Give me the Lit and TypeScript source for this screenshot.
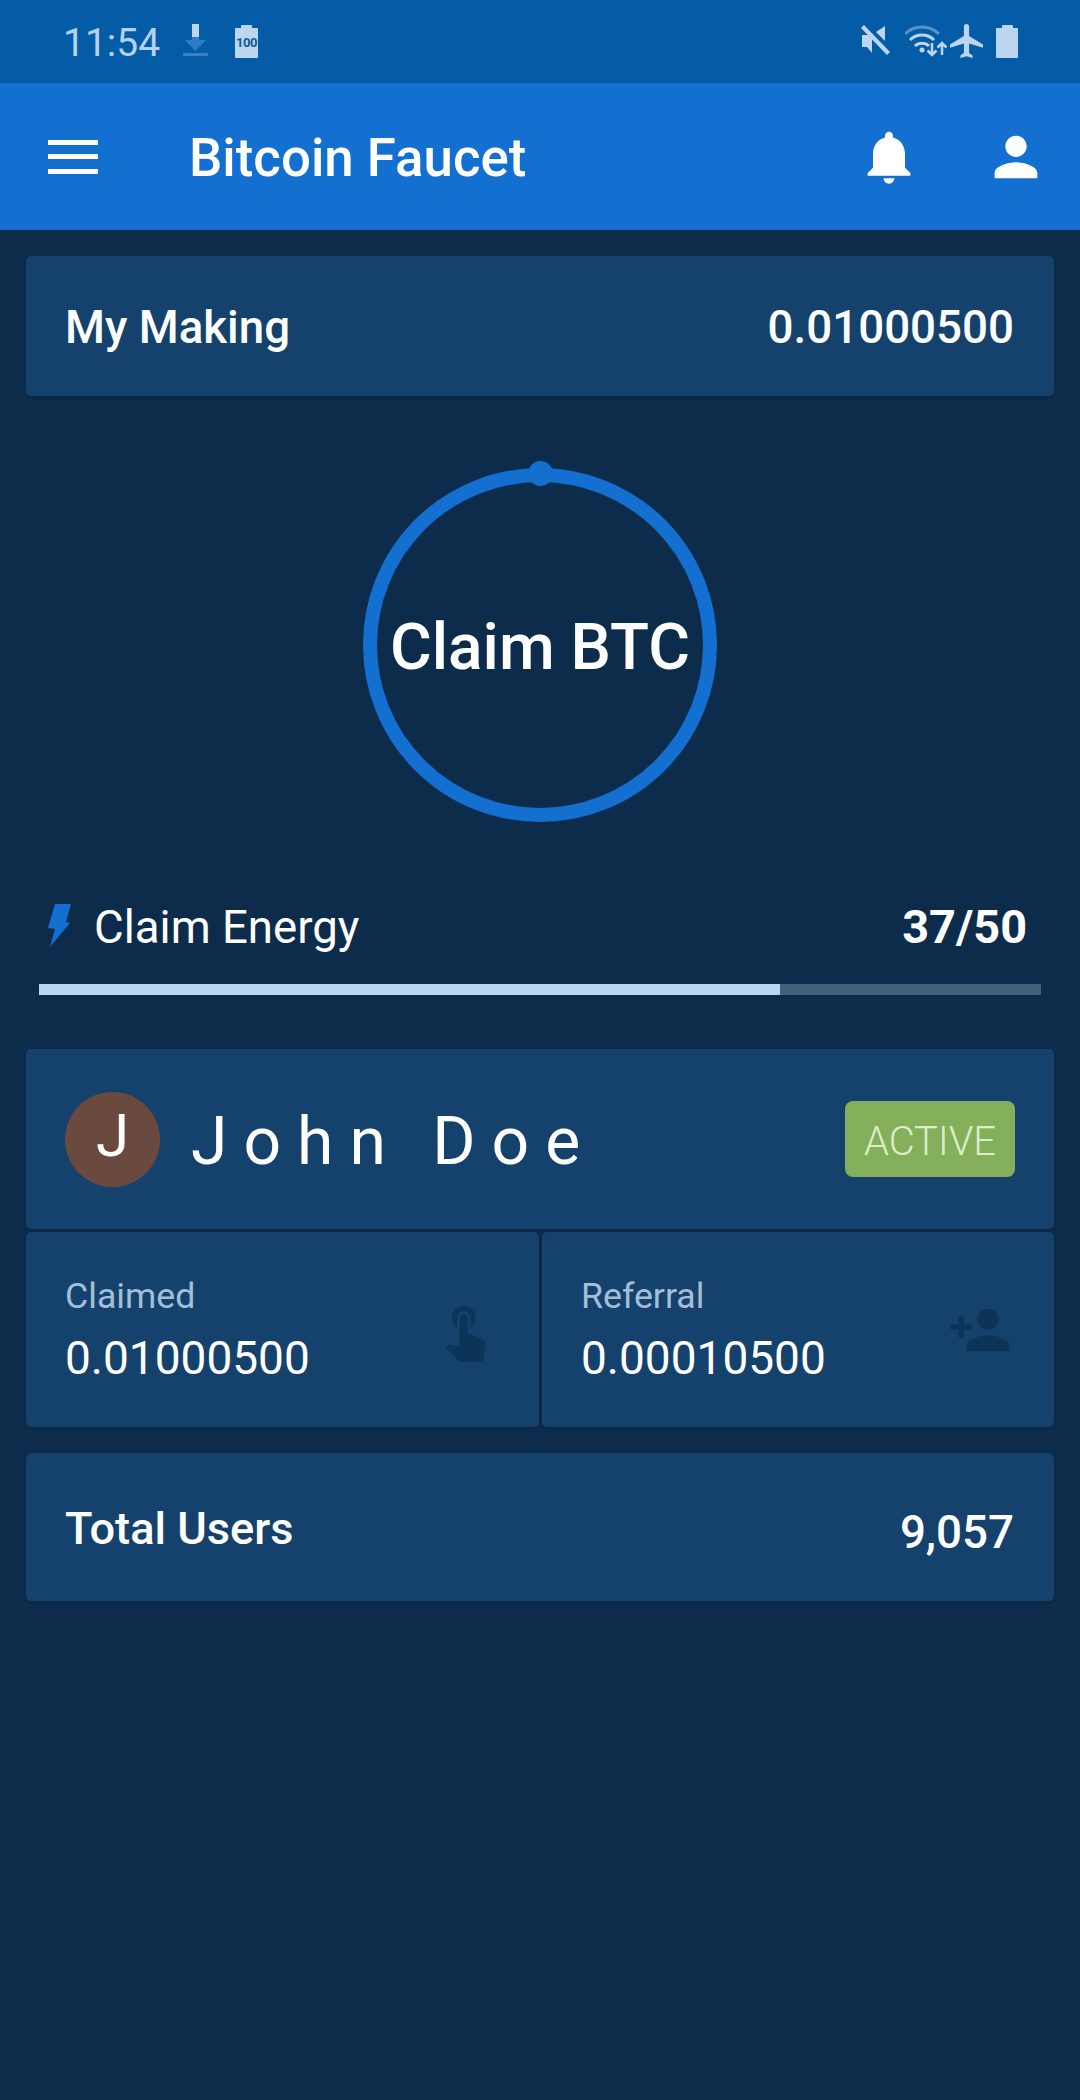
import { LitElement, html, css, svg } from "lit";
import { customElement, state } from "lit/decorators.js";

const BELL = "M12 22c1.1 0 2-.9 2-2h-4c0 1.1.89 2 2 2zm6-6v-5c0-3.07-1.64-5.64-4.5-6.32V4c0-.83-.67-1.5-1.5-1.5s-1.5.67-1.5 1.5v.68C7.63 5.36 6 7.92 6 11v5l-2 2v1h16v-1l-2-2z";
const PERSON = "M12 12c2.21 0 4-1.79 4-4s-1.79-4-4-4-4 1.79-4 4 1.79 4 4 4zm0 2c-2.67 0-8 1.34-8 4v2h16v-2c0-2.66-5.33-4-8-4z";
const PERSON_ADD = "M15 12c2.21 0 4-1.79 4-4s-1.79-4-4-4-4 1.79-4 4 1.79 4 4 4zm-9-2V7H4v3H1v2h3v3h2v-3h3v-2H6zm9 4c-2.67 0-8 1.34-8 4v2h16v-2c0-2.66-5.33-4-8-4z";
const TOUCH = "M9 11.24V7.5C9 6.12 10.12 5 11.5 5S14 6.12 14 7.5v3.74c1.21-.81 2-2.18 2-3.74C16 5.01 13.99 3 11.5 3S7 5.01 7 7.5c0 1.56.79 2.93 2 3.74zm9.84 4.63l-4.54-2.26c-.17-.07-.35-.11-.54-.11H13v-6c0-.83-.67-1.5-1.5-1.5S10 6.67 10 7.5v10.74l-3.43-.72c-.08-.01-.15-.03-.24-.03-.31 0-.59.13-.79.33l-.79.8 4.94 4.94c.27.27.65.44 1.06.44h6.79c.75 0 1.33-.55 1.44-1.28l.75-5.27c.01-.07.02-.14.02-.2 0-.62-.38-1.16-.91-1.38z";
const FLIGHT = "M21 16v-2l-8-5V3.5c0-.83-.67-1.5-1.5-1.5S10 2.67 10 3.5V9l-8 5v2l8-2.5V19l-2 1.5V22l3.5-1 3.5 1v-1.5L13 19v-5.5l8 2.5z";

@customElement("app-root")
export class AppRoot extends LitElement {
  @state()
  energy = 37;

  @state()
  maxEnergy = 50;

  static styles = css`
    :host {
      display: block;
      width: 1080px;
      height: 2100px;
      background: #0d2c4c;
      font-family: Roboto, "Liberation Sans", sans-serif;
      color: #fff;
    }

    /* status bar */
    .status {
      height: 83px;
      box-sizing: border-box;
      background: #045ca6;
      border-bottom: 1px solid #0a5aa0;
      display: flex;
      align-items: center;
      padding: 0 62px 0 63px;
      color: #bdd6ef;
    }
    .time {
      font-size: 39px;
      line-height: 44px;
      width: 120px;
      padding-top: 4px;
      color: #b4d2ee;
    }
    .spacer {
      flex: 1;
    }
    .download {
      display: block;
      width: 26px;
      height: 34px;
      margin-right: 26px;
    }
    .battery {
      position: relative;
      width: 23px;
      height: 30px;
      margin-top: 3px;
      background: #bdd6ef;
      border-radius: 1px;
      display: flex;
      align-items: center;
      justify-content: center;
    }
    .battery::before {
      content: "";
      position: absolute;
      top: -3px;
      left: 6px;
      width: 11px;
      height: 3px;
      background: #bdd6ef;
      border-radius: 1px 1px 0 0;
    }
    .battery span {
      font-size: 13px;
      font-weight: 700;
      letter-spacing: -0.5px;
      color: #0b5aa3;
    }
    .battery.small {
      width: 22px;
      margin-left: 13px;
    }
    .mute {
      width: 32px;
      height: 34px;
      margin-right: 12px;
    }
    .wifi {
      width: 44px;
      height: 34px;
      margin-right: 1px;
    }
    .flight {
      width: 33px;
      height: 34px;
    }

    /* app bar */
    .appbar {
      height: 147px;
      background: #136fd0;
      display: flex;
      align-items: center;
      padding: 0 32px 0 48px;
    }
    .burger {
      width: 50px;
      display: flex;
      flex-direction: column;
      gap: 9.5px;
      margin-right: 91px;
    }
    .burger i {
      display: block;
      height: 5px;
      background: #fff;
    }
    .title {
      font-size: 52.8px;
      line-height: 62px;
      padding-top: 2px;
      font-weight: 500;
      flex: 1;
    }
    .appbar svg {
      display: block;
      width: 64px;
      height: 64px;
      fill: #fff;
    }
    .appbar svg + svg {
      margin-left: 63px;
    }

    /* page content */
    .content {
      padding: 26px 26px 0;
    }
    .card {
      background: #15426c;
      border-radius: 5px;
      box-shadow: 0 1px 3px rgba(5, 25, 50, 0.4);
    }
    .line {
      display: flex;
      justify-content: space-between;
      align-items: center;
      padding: 0 40px 0 39px;
      font-size: 45.7px;
      font-weight: 500;
    }
    .making {
      height: 140px;
      padding-top: 3px;
      box-sizing: border-box;
    }
    .circle-wrap {
      display: flex;
      justify-content: center;
      margin-top: 72px;
    }
    .circle {
      position: relative;
      width: 354px;
      height: 354px;
      box-sizing: border-box;
      border: 14px solid #136fd0;
      border-radius: 50%;
      padding-top: 5px;
      display: flex;
      align-items: center;
      justify-content: center;
      font-size: 64px;
      font-weight: 500;
      white-space: nowrap;
    }
    .dot {
      position: absolute;
      top: -21px;
      left: 50%;
      width: 25px;
      height: 25px;
      margin-left: -12.5px;
      border-radius: 50%;
      background: #136fd0;
    }

    .energy {
      margin: 78px 13px 0;
    }
    .energy-row {
      display: flex;
      align-items: center;
      padding: 0 14px 0 9px;
      height: 54px;
      font-size: 45.6px;
    }
    .bolt {
      width: 24px;
      height: 43px;
      margin-right: 22px;
      margin-bottom: 4px;
      fill: #136fd0;
    }
    .energy-row b {
      margin-left: auto;
      font-size: 46.8px;
      font-weight: 700;
    }
    .track {
      height: 11px;
      margin-top: 30px;
      background: #43607b;
    }
    .fill {
      height: 100%;
      background: #b3d7f5;
    }

    .profile {
      margin-top: 54px;
      height: 180px;
      box-sizing: border-box;
      display: flex;
      align-items: center;
      padding: 0 39px;
    }
    .avatar {
      width: 95px;
      height: 95px;
      border-radius: 50%;
      background: #6a4a3e;
      display: flex;
      align-items: center;
      justify-content: center;
      font-size: 60px;
      line-height: 60px;
      padding-bottom: 6px;
      box-sizing: border-box;
    }
    .name {
      flex: 1;
      margin-left: 31px;
      padding-top: 4px;
      font-size: 66px;
      letter-spacing: 16px;
      word-spacing: -2px;
    }
    .badge {
      width: 170px;
      height: 76px;
      box-sizing: border-box;
      padding-top: 4px;
      border-radius: 8px;
      background: #84b05b;
      color: #dcedc8;
      display: flex;
      align-items: center;
      justify-content: center;
      font-size: 40px;
      font-weight: 300;
    }

    .stats {
      display: grid;
      grid-template-columns: 513px 512px;
      gap: 3px;
      margin-top: 3px;
    }
    .stat {
      height: 195px;
      box-sizing: border-box;
      display: flex;
      align-items: center;
      padding: 0 42px 0 39px;
    }
    .stat-text {
      flex: 1;
    }
    .stat-label {
      font-size: 35.7px;
      line-height: 44px;
      color: #a3bfd8;
    }
    .stat-value {
      font-size: 46px;
      line-height: 56px;
      margin-top: 12px;
    }
    .stat svg {
      width: 64px;
      height: 64px;
      fill: #0c3358;
    }

    .total {
      margin-top: 26px;
      height: 148px;
      padding-top: 3px;
      box-sizing: border-box;
    }
    .total span:first-child {
      font-size: 45.2px;
    }
    .total span:last-child {
      margin-top: 7px;
    }
  `;

  private muteIcon() {
    return svg`<svg class="mute" viewBox="0 0 32 34" fill="#bdd6ef">
      <path d="M1 11h6l4 4v14l-5-6H1z" />
      <path d="M24 2v15l-9-9z" />
      <path d="M3 1 L29 28 L26 31 L0 4z" />
    </svg>`;
  }

  private wifiIcon() {
    return svg`<svg class="wifi" viewBox="0 0 44 34" fill="none" stroke="#bdd6ef" stroke-width="3">
      <path d="M0 10a24 24 0 0 1 34 0" stroke-opacity="0.45" />
      <path d="M5 16a17 17 0 0 1 24 0" />
      <path d="M10 22a10 10 0 0 1 14 0" />
      <circle cx="17" cy="26" r="2.5" fill="#bdd6ef" stroke="none" />
      <path d="M27 19v12M22.5 26.5l4.5 4.5 4.5-4.5" stroke-width="2.5" />
      <path d="M37 31v-12M32.5 23.5l4.5-4.5 4.5 4.5" stroke-width="2.5" />
    </svg>`;
  }

  private downloadIcon() {
    return svg`<svg class="download" viewBox="0 0 26 34">
      <rect x="9" y="0" width="7" height="13" fill="#bdd6ef" />
      <path d="M9 13h7v3h7L12.5 27 2 16h7z" fill="#2d7cc4" />
      <rect x="0" y="29" width="25" height="3" fill="#3a7fc0" />
    </svg>`;
  }

  private stat(label: string, value: string, icon: string) {
    return html`<div class="card stat">
      <div class="stat-text">
        <div class="stat-label">${label}</div>
        <div class="stat-value">${value}</div>
      </div>
      <svg viewBox="0 0 24 24"><path d="${icon}" /></svg>
    </div>`;
  }

  render() {
    const pct = (this.energy / this.maxEnergy) * 100;

    return html`
      <div class="status">
        <span class="time">11:54</span>
        ${this.downloadIcon()}
        <div class="battery"><span>100</span></div>
        <div class="spacer"></div>
        ${this.muteIcon()} ${this.wifiIcon()}
        <svg class="flight" viewBox="2 2 19 20" preserveAspectRatio="none" fill="#bdd6ef"><path d="${FLIGHT}" /></svg>
        <div class="battery small"></div>
      </div>

      <div class="appbar">
        <div class="burger"><i></i><i></i><i></i></div>
        <div class="title">Bitcoin Faucet</div>
        <svg viewBox="0 0 24 24"><path d="${BELL}" /></svg>
        <svg viewBox="0 0 24 24"><path d="${PERSON}" /></svg>
      </div>

      <div class="content">
        <div class="card line making">
          <span>My Making</span>
          <span>0.01000500</span>
        </div>

        <div class="circle-wrap">
          <div class="circle">
            <div class="dot"></div>
            Claim BTC
          </div>
        </div>

        <div class="energy">
          <div class="energy-row">
            <svg class="bolt" viewBox="0 0 24 43"><path d="M7 0h16l-5 18 4 1L2 43l5-18-7-1z" /></svg>
            <span>Claim Energy</span>
            <b>${this.energy}/${this.maxEnergy}</b>
          </div>
          <div class="track"><div class="fill" style="width: ${pct}%"></div></div>
        </div>

        <div class="card profile">
          <div class="avatar">J</div>
          <div class="name">John Doe</div>
          <div class="badge">ACTIVE</div>
        </div>

        <div class="stats">
          ${this.stat("Claimed", "0.01000500", TOUCH)}
          ${this.stat("Referral", "0.00010500", PERSON_ADD)}
        </div>

        <div class="card line total">
          <span>Total Users</span>
          <span>9,057</span>
        </div>
      </div>
    `;
  }
}
